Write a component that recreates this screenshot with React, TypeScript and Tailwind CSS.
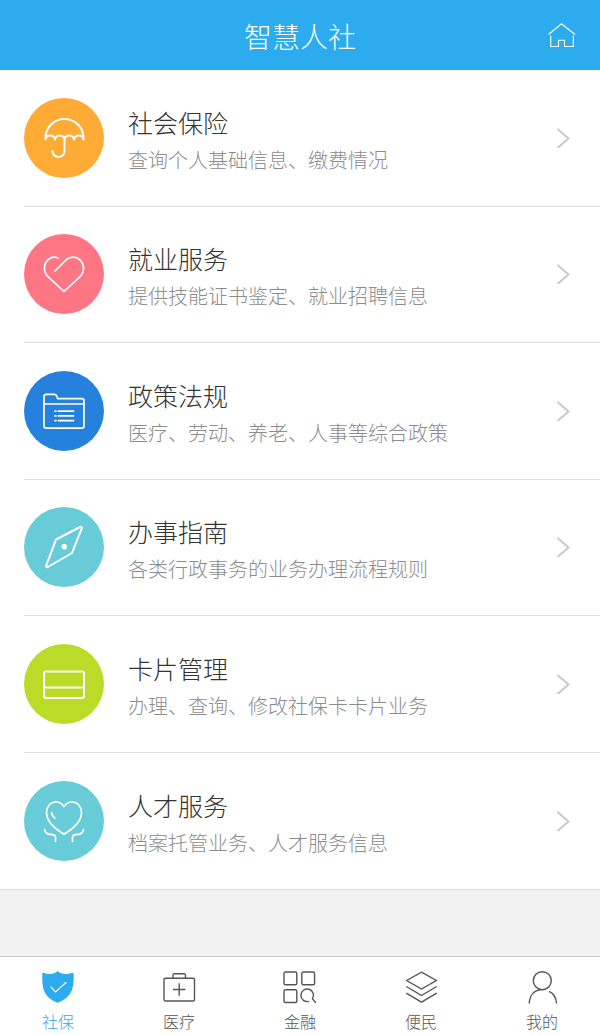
import { useState, type ReactNode } from 'react';

interface Service {
  id: string;
  title: string;
  desc: string;
  color: string;
  icon: ReactNode;
}

interface Tab {
  id: string;
  label: string;
  icon: ReactNode;
}

const services: Service[] = [
  {
    id: 'insurance',
    title: '社会保险',
    desc: '查询个人基础信息、缴费情况',
    color: 'bg-[#ffab36]',
    icon: (
      <path
        strokeWidth="2"
        d="M21.5 41.5V40a19 19 0 0 1 38 0v1.5c-1-5.5-8.5-5.5-9.5 0c-1-5.5-8.5-5.5-9.5 0c-1-5.5-8.5-5.5-9.5 0c-1-5.5-8.5-5.5-9.5 0M40.5 39v14a6 6 0 0 1-12 0"
      />
    ),
  },
  {
    id: 'job',
    title: '就业服务',
    desc: '提供技能证书鉴定、就业招聘信息',
    color: 'bg-[#fe7683]',
    icon: (
      <path d="M34 24C27 21 20.5 27 20.5 34c0 4 1.5 7 4 9.2L40 57.5l15.5-14.3c2.5-2.2 4-5.2 4-9.2c0-6-4.5-10.8-10.5-10.8c-3 0-5.500 1.300-7.500 3.300L31 37" />
    ),
  },
  {
    id: 'policy',
    title: '政策法规',
    desc: '医疗、劳动、养老、人事等综合政策',
    color: 'bg-[#2681dc]',
    icon: (
      <>
        <path d="M20 55V25.500a2.200 2.200 0 0 1 2.200-2.200h8.300c1.500 0 2 .8 2.500 2.200l.7 2.200h24.100a2.200 2.200 0 0 1 2.200 2.200V55a2.200 2.200 0 0 1-2.200 2.200H22.200A2.200 2.200 0 0 1 20 55zM20 33h40" />
        <path d="M34.500 40.200h15M34.500 44.900h15M34.500 49.600h15M31 40.200h1M31 44.900h1M31 49.600h1" />
      </>
    ),
  },
  {
    id: 'guide',
    title: '办事指南',
    desc: '各类行政事务的业务办理流程规则',
    color: 'bg-[#68ccd8]',
    icon: (
      <>
        <path strokeWidth="2" d="M32 32.500L56.200 20c1.200-.6 2 .2 1.600 1.300L48 46L23.800 60c-1.200.6-2-.2-1.600-1.300z" />
        <circle cx="40.300" cy="39.800" r="2.800" fill="currentColor" stroke="none" />
      </>
    ),
  },
  {
    id: 'card',
    title: '卡片管理',
    desc: '办理、查询、修改社保卡卡片业务',
    color: 'bg-[#bbdb29]',
    icon: (
      <>
        <rect x="20" y="27.500" width="40" height="26.500" rx="2" strokeWidth="2" />
        <path strokeWidth="2" d="M20 43.500h40" />
      </>
    ),
  },
  {
    id: 'talent',
    title: '人才服务',
    desc: '档案托管业务、人才服务信息',
    color: 'bg-[#68ccd8]',
    icon: (
      <>
        <path d="M40 25.500c-2-3-4.800-4.500-8-4.500c-5.500 0-9.500 4.500-9.500 10.500c0 9 7 15.500 17.500 21.700c10.500-6.200 17.500-12.700 17.500-21.700c0-6-4-10.500-9.500-10.500c-3.200 0-6 1.500-8 4.500z" />
        <path d="M27.500 31.500c.4 2.300 1.500 4.200 3.300 5.700" />
        <path d="M20.500 48.700c.7 3 3 4.500 6 4.700c3.500.1 5 .5 5 2.600v4.500M59.500 48.700c-.7 3-3 4.500-6 4.700c-3.500.1-5 .5-5 2.600v4.500" />
      </>
    ),
  },
];

const tabs: Tab[] = [
  {
    id: 'social',
    label: '社保',
    icon: (
      <>
        <path
          fill="currentColor"
          stroke="none"
          d="M16.700.3C13.500 3 8.500 4 2.200 1.700C1 1.500 1.300 3 1.300 5C1 18 3.500 27 16.700 31.700C30 27 33 18 32.700 5c0-2 0-3.500-1.500-3.300C25 4 20 3 16.700.3z"
        />
        <path stroke="#fff" strokeWidth="1.200" d="M9.700 15.700l4.800 5.300L25.300 11.300" />
      </>
    ),
  },
  {
    id: 'medical',
    label: '医疗',
    icon: (
      <>
        <rect x="2" y="7.300" width="30.500" height="22.700" rx="1.500" />
        <path d="M11 7V4.300A1.500 1.500 0 0 1 12.500 2.800h9.500a1.500 1.500 0 0 1 1.500 1.500V7M17.200 12.300v12.400M11 18.500h12.400" />
      </>
    ),
  },
  {
    id: 'finance',
    label: '金融',
    icon: (
      <>
        <rect x="1" y="1" width="12.800" height="12.800" rx="1.500" />
        <rect x="18.800" y="1" width="12.800" height="12.800" rx="1.500" />
        <rect x="1" y="18.700" width="12.800" height="12.800" rx="1.500" />
        <path d="M26 30.300a6.300 6.300 0 1 1 3.400-2.500l3.400 4" />
      </>
    ),
  },
  {
    id: 'public',
    label: '便民',
    icon: (
      <path d="M17.500 1.200L32.300 9.500L17.500 18L2.700 9.500zM2.300 15.500l15.200 9l15.200-9M2.300 22.200l15.200 9l15.200-9" />
    ),
  },
  {
    id: 'mine',
    label: '我的',
    icon: (
      <>
        <circle cx="17.300" cy="9.700" r="9" />
        <path d="M15.500 18.700C8.500 19.500 4.500 25 4.300 32.500M24 20.300c4.500 2 7.200 6.500 7.500 12.200" />
      </>
    ),
  },
];

export default function App() {
  const [activeTab, setActiveTab] = useState('social');

  return (
    <div className="flex min-h-screen flex-col bg-[#f2f2f2] font-['Noto_Sans_CJK_SC',sans-serif] font-light">
      {/* 顶部栏 */}
      <header className="grid h-[70px] grid-cols-[28px_1fr_28px] items-center bg-[#2cabee] px-6 text-white">
        <h1 className="col-start-2 pt-0.5 text-center text-[28px] leading-9">智慧人社</h1>
        <button type="button" aria-label="首页">
          <svg className="h-6 w-7" viewBox="0 0 28 24" fill="none" stroke="currentColor" strokeWidth="1.100">
            <path d="M.500 11.500L13.500.800L27 11.500M2.700 12.500v11h7.800v-6.300h6v6.300h8.800v-11" />
          </svg>
        </button>
      </header>

      {/* 服务列表 */}
      <main className="flex flex-1 flex-col">
        <ul className="grid flex-1 auto-rows-fr border-b border-[#dedede] bg-white">
          {services.map((service) => (
            <li key={service.id} className="group pl-6">
              <a
                href={`#${service.id}`}
                className="flex h-full items-center gap-6 border-b border-[#dedede] py-6 pr-[30px] group-last:border-b-0"
              >
                <span className={`size-20 shrink-0 rounded-full text-white ${service.color}`}>
                  <svg
                    className="size-20"
                    viewBox="0 0 80 80"
                    fill="none"
                    stroke="currentColor"
                    strokeWidth="1.700"
                    strokeLinecap="round"
                    strokeLinejoin="round"
                  >
                    {service.icon}
                  </svg>
                </span>
                <span className="flex min-w-0 flex-1 flex-col gap-0.5 pt-1.5">
                  <span className="text-[25px] leading-9 text-[#333333]">{service.title}</span>
                  <span className="text-xl leading-9 text-[#8c8c8c]">{service.desc}</span>
                </span>
                <svg
                  className="h-5 w-[14px] shrink-0 text-[#c8c8c8]"
                  viewBox="0 0 14 20"
                  fill="none"
                  stroke="currentColor"
                  strokeWidth="2"
                >
                  <path d="M1.500 1L12.500 10.500L1.500 20" />
                </svg>
              </a>
            </li>
          ))}
        </ul>
        <div className="h-[66px]" />
      </main>

      {/* 底部导航 */}
      <nav className="flex h-[79px] justify-between border-t border-[#c9c9c9] bg-white px-[41px] pt-[14px]">
        {tabs.map((tab) => (
          <button
            key={tab.id}
            type="button"
            onClick={() => setActiveTab(tab.id)}
            className={`flex w-[34px] flex-col items-center gap-1 ${
              activeTab === tab.id ? 'text-[#2cabee]' : 'text-[#555555]'
            }`}
          >
            <svg
              className="size-[34px] shrink-0"
              viewBox="0 0 34 34"
              fill="none"
              stroke="currentColor"
              strokeWidth="1.400"
            >
              {tab.icon}
            </svg>
            <span className="text-base leading-6 whitespace-nowrap">{tab.label}</span>
          </button>
        ))}
      </nav>
    </div>
  );
}
